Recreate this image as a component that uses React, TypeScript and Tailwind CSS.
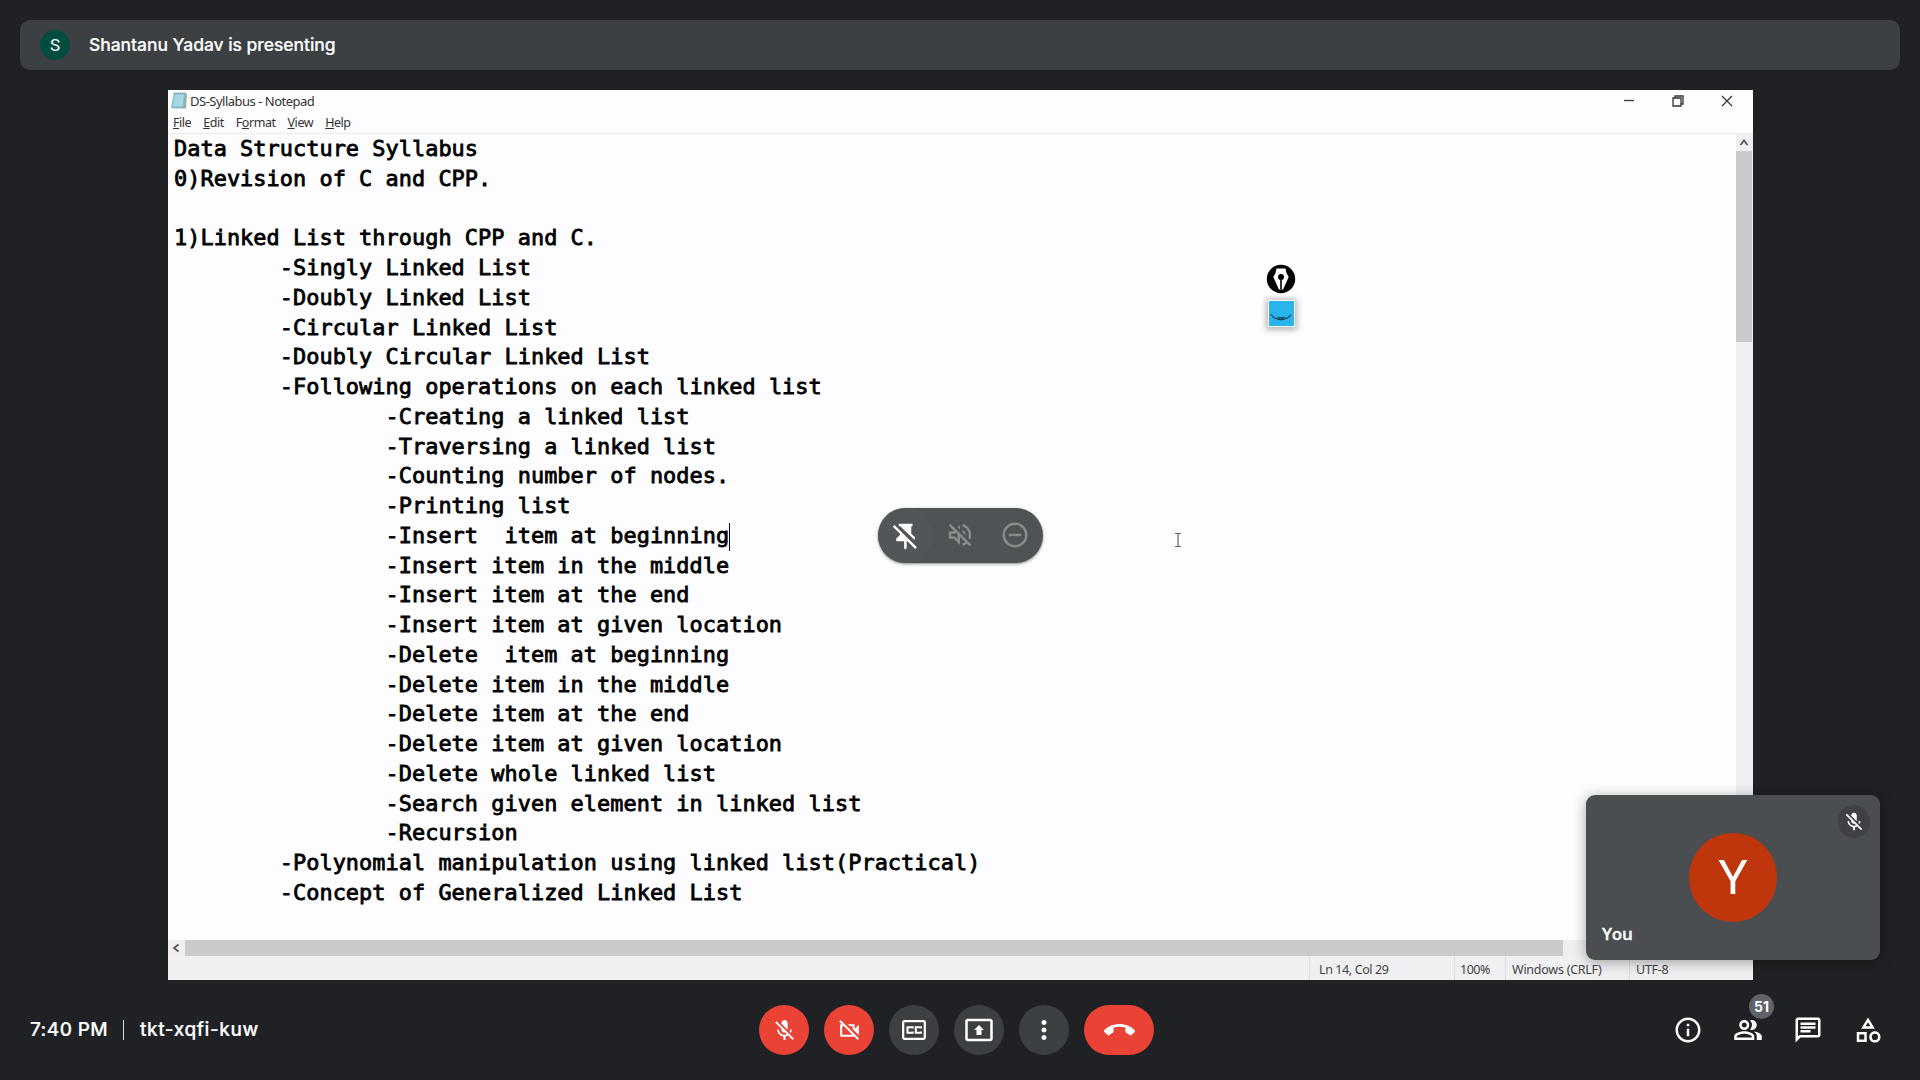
import React from "react";
import {
  MdMicOff,
  MdOutlineVideocamOff,
  MdOutlinePresentToAll,
  MdMoreVert,
  MdCallEnd,
  MdOutlineInfo,
  MdOutlinePeopleAlt,
  MdOutlineChat,
  MdOutlineCategory,
  MdOutlineVolumeOff,
  MdRemoveCircleOutline,
} from "react-icons/md";

const lines = [
  "Data Structure Syllabus",
  "0)Revision of C and CPP.",
  "",
  "1)Linked List through CPP and C.",
  "\t-Singly Linked List",
  "\t-Doubly Linked List",
  "\t-Circular Linked List",
  "\t-Doubly Circular Linked List",
  "\t-Following operations on each linked list",
  "\t\t-Creating a linked list",
  "\t\t-Traversing a linked list",
  "\t\t-Counting number of nodes.",
  "\t\t-Printing list",
  "\t\t-Insert  item at beginning",
  "\t\t-Insert item in the middle",
  "\t\t-Insert item at the end",
  "\t\t-Insert item at given location",
  "\t\t-Delete  item at beginning",
  "\t\t-Delete item in the middle",
  "\t\t-Delete item at the end",
  "\t\t-Delete item at given location",
  "\t\t-Delete whole linked list",
  "\t\t-Search given element in linked list",
  "\t\t-Recursion",
  "\t-Polynomial manipulation using linked list(Practical)",
  "\t-Concept of Generalized Linked List",
];

const CARET_LINE = 13;

function NotepadIcon() {
  return (
    <svg viewBox="0 0 18 18" className="h-[18px] w-[18px]">
      <path d="M4 1.5h13l-1 15h-13z" fill="#a9a79c" />
      <path d="M4 .8h11.600l-1.400 15.200H1z" fill="#7fb9cb" />
      <path d="M5 2.500h9L12.800 14.500H2.800z" fill="#a5d8e4" />
      <path d="M4 1.200h11.800" stroke="#8c9a9c" strokeWidth="1" strokeDasharray="1 1" />
    </svg>
  );
}

function TitleBar() {
  return (
    <div className="flex h-[22px] items-center justify-between pl-[2px] pr-[20px] text-[#333]">
      <div className="flex items-center gap-[2px]">
        <NotepadIcon />
        <span className="whitespace-nowrap text-[13px] leading-none tracking-[-0.5px]">DS-Syllabus - Notepad</span>
      </div>
      <div className="flex items-center gap-[37px]">
        <svg viewBox="0 0 11 11" className="h-[11px] w-[11px]" stroke="#444" fill="none">
          <path d="M0 4.500h10" strokeWidth="1.4" />
        </svg>
        <svg viewBox="0 0 12 12" className="h-[12px] w-[12px]" stroke="#333" fill="none" strokeWidth="1.3">
          <path d="M1 3h8v8H1zM3 3V1h8v8H9" />
        </svg>
        <svg viewBox="0 0 12 12" className="h-[12px] w-[12px]" stroke="#333" fill="none" strokeWidth="1.2">
          <path d="M1 1l10 10M11 1L1 11" />
        </svg>
      </div>
    </div>
  );
}

function MenuBar() {
  return (
    <div className="flex h-[22px] items-center gap-3 border-b border-[#ececee] pl-[5px] pt-[2px] text-[12.5px] leading-none tracking-[-0.45px] text-[#333]">
      <span><u>F</u>ile</span>
      <span><u>E</u>dit</span>
      <span>F<u>o</u>rmat</span>
      <span><u>V</u>iew</span>
      <span><u>H</u>elp</span>
    </div>
  );
}

function StatusBar() {
  return (
    <div className="flex h-[23px] justify-end bg-[#f0eff1] text-[12.5px] leading-[26px] tracking-[-0.25px] text-[#444]">
      <span className="w-[145px] border-l border-[#dcdcde] pl-[9px] tracking-[-0.4px]">Ln 14, Col 29</span>
      <span className="w-[51px] border-l border-[#dcdcde] pl-[5px] tracking-[-0.5px]">100%</span>
      <span className="w-[124px] border-l border-[#dcdcde] pl-[6px]">Windows (CRLF)</span>
      <span className="w-[124px] border-l border-[#dcdcde] pl-[6px]">UTF-8</span>
    </div>
  );
}

function PresenterTools() {
  return (
    <div className="absolute left-[1098px] top-[174px] flex flex-col items-center gap-[6px]">
      <svg viewBox="0 0 30 30" className="h-[30px] w-[30px]">
        <circle cx="15" cy="15" r="14.2" fill="#000" />
        <path d="M10.500 4.500h9l1 4.500 2.200 4-5.600 12.500h-4.200L7.300 13l2.200-4z" fill="#fff" />
        <circle cx="15" cy="13" r="3" fill="#000" />
        <path d="M15 13v12.500" stroke="#000" strokeWidth="1.6" />
      </svg>
      <div className="flex h-[27px] w-[27px] items-center justify-center border border-white bg-[#29b5ea] shadow-[0_1px_6px_2px_rgba(0,0,0,0.28)]">
        <svg viewBox="0 0 24 24" className="h-6 w-6" fill="none" stroke="#10475f" strokeWidth="1.3">
          <path d="M2 12.500q3 5 10 5t10-5M8 15.300q4 1 8 0" />
        </svg>
      </div>
    </div>
  );
}

function PinOff() {
  return (
    <svg viewBox="0 0 24 24" className="h-[30px] w-[30px]" fill="#fff">
      <path d="M7 3h11v2h-1v6l3 2.800V15.500h-.7L8 4.700V5H7z" />
      <path d="M2.200 5.300L3.600 3.900 21.500 21.700 20.100 23.100 14 17H13.300v5.500L12.400 23.500 11.300 22.500V17H5v-2.200L8 12v-1z" />
    </svg>
  );
}

function TilePill() {
  return (
    <div className="absolute left-[710px] top-[418px] flex h-[55px] w-[165px] items-center overflow-hidden rounded-full bg-[#4f5355] shadow-[0_1px_3px_rgba(0,0,0,0.45)]">
      <div className="flex h-[55px] w-[55px] items-center justify-center rounded-full bg-[#525658] pb-px pr-[2px]"><PinOff /></div>
      <div className="flex h-[55px] w-[55px] items-center justify-center pb-px pr-[2px]"><MdOutlineVolumeOff className="h-[30px] w-[30px] text-[#888b8c]" /></div>
      <div className="flex h-[55px] w-[55px] items-center justify-center pb-px pr-[2px]"><MdRemoveCircleOutline className="h-[30px] w-[30px] text-[#888b8c]" /></div>
    </div>
  );
}

function Notepad() {
  return (
    <div className="relative flex h-[890px] w-[1585px] flex-col bg-[#fdfcfe] font-['Noto_Sans','Open_Sans',sans-serif]">
      <TitleBar />
      <MenuBar />
      <div className="flex flex-1">
        <div className="flex-1 pl-[6px]">
          {lines.map((line, i) => (
            <pre
              key={i}
              className="h-[29.75px] font-['DejaVu_Sans_Mono',monospace] text-[21.9px] leading-[30.3px] tracking-[0.04px] text-black [-webkit-text-stroke:0.8px_black] [tab-size:8]"
            >
              {line}
              {i === CARET_LINE && <span className="inline-block h-[28px] w-px bg-black align-middle" />}
            </pre>
          ))}
        </div>
        <div className="flex w-[17px] flex-col bg-[#f0f0f1]">
          <div className="flex h-[17px] items-center justify-center pr-px">
            <svg viewBox="0 0 10 8" className="h-2 w-[10px]" fill="none" stroke="#555" strokeWidth="1.8">
              <path d="M1.500 6L5 1.500l3.500 4.500" />
            </svg>
          </div>
          <div className="h-[191px] w-4 bg-[#cacacb]" />
        </div>
      </div>
      <div className="flex h-[17px] items-start bg-[#f0eef1]">
        <div className="flex h-4 w-[17px] items-center justify-center pr-[2px]">
          <svg viewBox="0 0 8 10" className="h-[10px] w-2" fill="none" stroke="#555" strokeWidth="1.8">
            <path d="M6.500 1.500L2 5l4.500 3.500" />
          </svg>
        </div>
        <div className="h-4 w-[1378px] bg-[#cacacb]" />
      </div>
      <StatusBar />
      <PresenterTools />
      <TilePill />
      <svg viewBox="0 0 8 16" className="absolute left-[1006px] top-[442px] h-4 w-2" fill="none" stroke="#666" strokeWidth="1.200">
        <path d="M1 1.500h6M1 14.500h6M4 1.500v13" />
      </svg>
    </div>
  );
}

function SelfTile() {
  return (
    <div className="absolute left-[1586px] top-[795px] flex h-[165px] w-[294px] items-center justify-center rounded-[9px] bg-[#4a4e50] shadow-[0_2px_14px_rgba(0,0,0,0.35)]">
      <div className="mb-px flex h-[89px] w-[88px] items-center justify-center rounded-full bg-[#bf360c] font-[Roboto,sans-serif] text-[49px] leading-none text-white">
        Y
      </div>
      <div className="absolute right-[10px] top-[10px] flex h-[33px] w-[32px] items-center justify-center rounded-full bg-[#3f4144]">
        <MdMicOff className="h-[22px] w-[22px] text-white" />
      </div>
      <span className="absolute bottom-[14px] left-[16px] font-['Open_Sans',sans-serif] text-[17px] font-semibold leading-6 tracking-[-0.2px] text-white [-webkit-text-stroke:0.3px_white]">You</span>
    </div>
  );
}

function ClosedCaption() {
  return (
    <svg viewBox="0 0 24 20" className="h-5 w-6" fill="none" stroke="#fff">
      <rect x="1.200" y="1.200" width="21.600" height="17.600" rx="1.200" strokeWidth="2.200" />
      <path d="M10.600 8.500V7.300H5.500v5.400h5.100v-1.200M18.900 8.500V7.300h-5.100v5.400h5.100v-1.200" strokeWidth="2.100" />
    </svg>
  );
}

function RoundButton({ red, children }: { red?: boolean; children: React.ReactNode }) {
  return (
    <button
      className={`flex h-[50px] w-[50px] items-center justify-center rounded-full text-white ${red ? "bg-[#ea4335]" : "bg-[#3c4043]"}`}
    >
      {children}
    </button>
  );
}

function BottomBar() {
  return (
    <div className="grid h-[100px] grid-cols-[759px_auto_1fr] items-center text-white">
      <div className="flex items-center pl-[30px] text-[19px] font-medium leading-none [-webkit-text-stroke:0.2px_white]">
        <span className="w-[93px] whitespace-nowrap pb-[2px] tracking-[0.4px]">7:40 PM</span>
        <span className="h-5 w-px bg-[#dadce0]" />
        <span className="whitespace-nowrap pb-[2px] pl-[16px] tracking-[0.55px]">tkt-xqfi-kuw</span>
      </div>
      <div className="flex gap-[15px]">
        <RoundButton red><MdMicOff className="h-[25px] w-[25px]" /></RoundButton>
        <RoundButton red><MdOutlineVideocamOff className="h-[25px] w-[25px]" /></RoundButton>
        <RoundButton><ClosedCaption /></RoundButton>
        <RoundButton><MdOutlinePresentToAll className="h-[30px] w-[30px]" /></RoundButton>
        <RoundButton><MdMoreVert className="h-[30px] w-[30px]" /></RoundButton>
        <button className="flex h-[50px] w-[70px] items-center justify-center rounded-full bg-[#ea4335]">
          <MdCallEnd className="h-[31px] w-[31px]" />
        </button>
      </div>
      <div className="flex items-center justify-end gap-[30px] pr-[37px]">
        <MdOutlineInfo className="h-[30px] w-[30px]" />
        <div className="relative">
          <MdOutlinePeopleAlt className="h-[30px] w-[30px]" />
          <span className="absolute -top-[21px] left-[16px] flex h-[25px] w-[25px] items-center justify-center rounded-full bg-[#5f6368] text-[14px] font-bold leading-none">51</span>
        </div>
        <MdOutlineChat className="h-[30px] w-[30px]" />
        <MdOutlineCategory className="h-[30px] w-[30px]" />
      </div>
    </div>
  );
}

export default function App() {
  return (
    <div className="relative flex h-[1080px] w-[1920px] flex-col overflow-hidden bg-[#202124] font-[Inter,sans-serif]">
      <div className="px-5 pt-5">
        <div className="flex h-[50px] items-center gap-[19px] rounded-[10px] bg-[#3c4043] pl-5 text-white">
          <div className="flex h-[30px] w-[30px] items-center justify-center rounded-full bg-[#004d40] font-[Roboto,sans-serif] text-[17px] leading-none">S</div>
          <span className="whitespace-nowrap text-[17.500px] font-medium leading-none tracking-[-0.05px] [-webkit-text-stroke:0.2px_white]">Shantanu Yadav is presenting</span>
        </div>
      </div>
      <div className="pl-[168px] pt-5">
        <Notepad />
      </div>
      <BottomBar />
      <SelfTile />
    </div>
  );
}
